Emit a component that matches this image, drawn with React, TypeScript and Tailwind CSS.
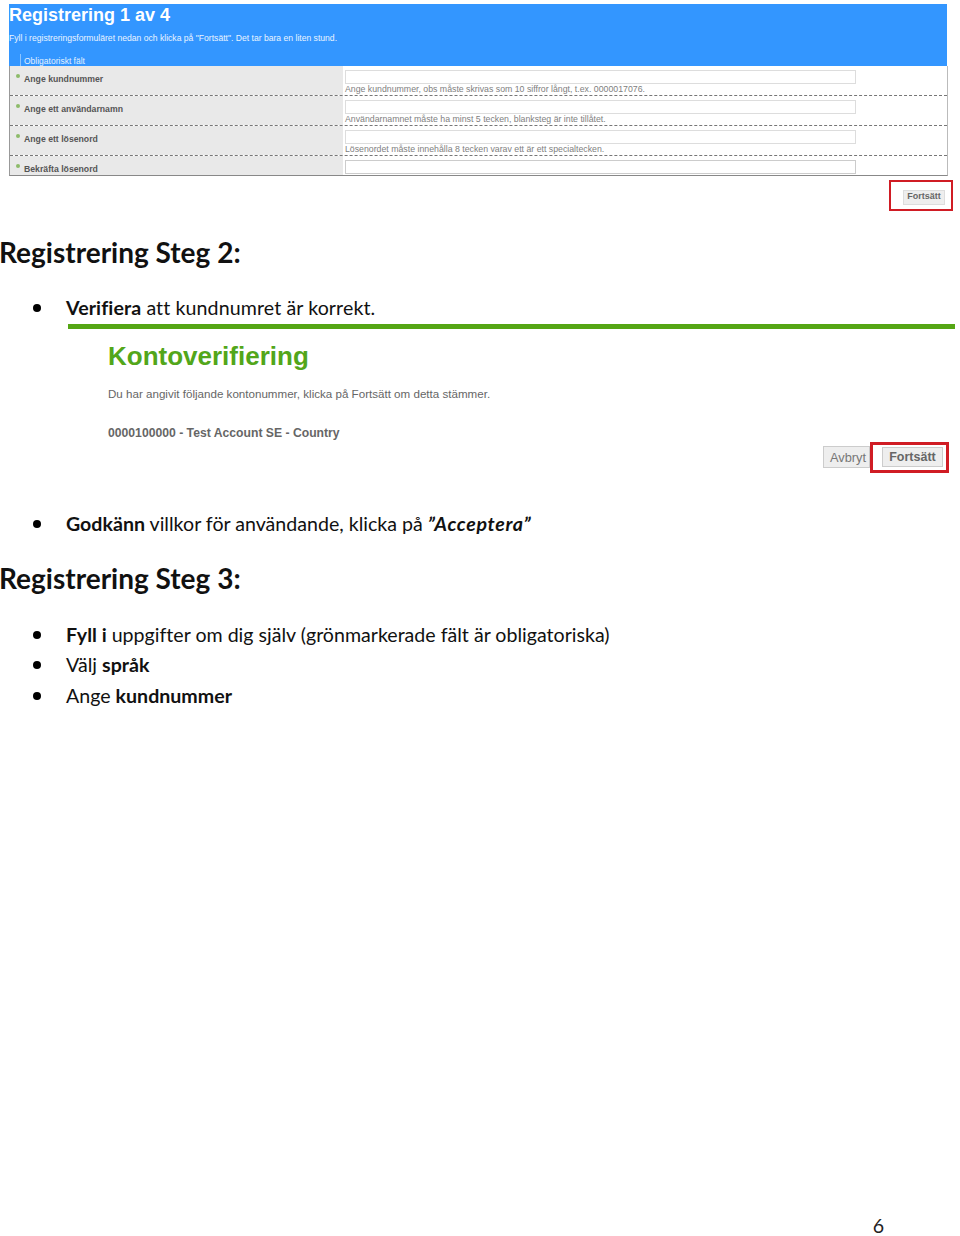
const rows = [
  { label: 'Ange kundnummer', hint: 'Ange kundnummer, obs måste skrivas som 10 siffror långt, t.ex. 0000017076.' },
  { label: 'Ange ett användarnamn', hint: 'Användarnamnet måste ha minst 5 tecken, blanksteg är inte tillåtet.' },
  { label: 'Ange ett lösenord', hint: 'Lösenordet måste innehålla 8 tecken varav ett är ett specialtecken.' },
];

function Bullet({ children }: { children: React.ReactNode }) {
  return (
    <li className="flex items-center h-[30.5px] text-[19.6px] text-[#111] leading-none [font-variant-ligatures:none]">
      <span className="w-[8px] h-[8px] rounded-full bg-black ml-[33px] mr-[25px] shrink-0" />
      <span>{children}</span>
    </li>
  );
}

function Label({ text }: { text: string }) {
  return (
    <div className="w-[333px] bg-[#e9e9e9] flex pl-[6px] pt-[8px] text-[8.7px] font-bold text-[#555] leading-none">
      <span className="w-[4px] h-[4px] rounded-full bg-[#8dbb6a] mr-[4px]" />
      <span className="mt-[1px]">{text}</span>
    </div>
  );
}

function FormRow({ label, hint }: { label: string; hint: string }) {
  return (
    <div className="flex h-[30px] border-b border-dashed border-[#777]">
      <Label text={label} />
      <div className="flex-1 pl-[2px] pt-[4px]">
        <div className="w-[511px] h-[14px] border border-[#ddd] bg-white" />
        <div className="text-[8.75px] text-[#808080] leading-none mt-[1px] whitespace-nowrap">{hint}</div>
      </div>
    </div>
  );
}

export default function App() {
  return (
    <div className="w-[960px] h-[1236px] bg-white overflow-hidden flex flex-col font-['Lato','Liberation_Sans',sans-serif]">
      {/* screenshot 1 */}
      <div className="ml-[9px] mt-[4px] w-[939px] font-['Liberation_Sans',sans-serif]">
        <div className="w-[938px] h-[62px] bg-[#3396ff] text-white flex flex-col">
          <div className="text-[18px] font-bold leading-none mt-[2px]">Registrering 1 av 4</div>
          <div className="text-[8.6px] leading-none mt-[10px] text-[#eaf4ff] whitespace-nowrap">
            Fyll i registreringsformuläret nedan och klicka på "Fortsätt". Det tar bara en liten stund.
          </div>
          <div className="flex items-end h-[12px] mt-[11px] text-[8.5px] text-[#e2f0ff] leading-none">
            <span className="w-px h-[12px] bg-[#8cc4ff] ml-[11px] mr-[3px]" />
            <span>Obligatoriskt fält</span>
          </div>
        </div>
        <div className="border-r border-r-[#bbb] border-b border-b-[#888] border-l border-l-[#999] h-[110px] overflow-hidden">
          {rows.map((r) => (
            <FormRow key={r.label} label={r.label} hint={r.hint} />
          ))}
          <div className="flex h-[20px]">
            <Label text="Bekräfta lösenord" />
            <div className="flex-1 pl-[2px] pt-[4px]">
              <div className="w-[511px] h-[14px] border border-[#ccc] bg-white" />
            </div>
          </div>
        </div>
      </div>
      <div className="flex justify-end mt-[4px] mr-[7px]">
        <div className="w-[64px] h-[31px] border-2 border-[#d01c24] flex items-center justify-end pr-[6px] pt-[3px] font-['Liberation_Sans',sans-serif]">
          <div className="w-[42px] h-[15px] bg-[#eeeeee] border border-[#ddd] text-[9px] font-bold text-[#666] flex items-center justify-center">
            Fortsätt
          </div>
        </div>
      </div>

      <h2 className="text-[28px] font-bold text-[#111] leading-none mt-[27px] -ml-[1px] whitespace-nowrap [font-variant-ligatures:none]">Registrering Steg 2:</h2>
      <ul className="mt-[27px]">
        <Bullet>
          <span className="tracking-[0.1px]">
            <b>Verifiera</b> att kundnumret är korrekt.
          </span>
        </Bullet>
      </ul>

      {/* screenshot 2 */}
      <div className="ml-[68px] mt-[0.5px] w-[887px] h-[5px] bg-[#55a614]" />
      <div className="ml-[108px] font-['Liberation_Sans',sans-serif]">
        <div className="text-[26px] font-bold text-[#52a61a] leading-none mt-[14px]">Kontoverifiering</div>
        <div className="text-[11.6px] text-[#666] leading-none mt-[19px] whitespace-nowrap">
          Du har angivit följande kontonummer, klicka på Fortsätt om detta stämmer.
        </div>
        <div className="text-[12.2px] font-bold text-[#666] leading-none mt-[27px]">0000100000 - Test Account SE - Country</div>
      </div>
      <div className="flex justify-end items-center mr-[11px] mt-[3px] font-['Liberation_Sans',sans-serif]">
        <div className="w-[47px] h-[22px] bg-[#eeeeee] border border-[#ccc] text-[12.8px] text-[#777] flex items-center justify-center pl-[3px]">
          Avbryt
        </div>
        <div className="w-[79px] h-[31px] border-[3px] border-[#d01c24] flex items-center justify-end pr-[3px]">
          <div className="w-[61px] h-[20px] bg-[#eeeeee] border border-[#ccc] text-[12.5px] font-bold text-[#666] flex items-center justify-center">
            Fortsätt
          </div>
        </div>
      </div>

      <ul className="mt-[36px]">
        <Bullet>
          <b>Godkänn</b> villkor för användande, klicka på <b className="tracking-[0.7px]"><i>”Acceptera”</i></b>
        </Bullet>
      </ul>
      <h2 className="text-[28px] font-bold text-[#111] leading-none mt-[25px] -ml-[1px] whitespace-nowrap">Registrering Steg 3:</h2>
      <ul className="mt-[27px]">
        <Bullet>
          <b>Fyll i</b> uppgifter om dig själv (grönmarkerade fält är obligatoriska)
        </Bullet>
        <Bullet>
          Välj <b>språk</b>
        </Bullet>
        <Bullet>
          Ange <b>kundnummer</b>
        </Bullet>
      </ul>

      <div className="mt-auto pr-[76px] text-right text-[19.6px] text-[#222] leading-none">6</div>
    </div>
  );
}
